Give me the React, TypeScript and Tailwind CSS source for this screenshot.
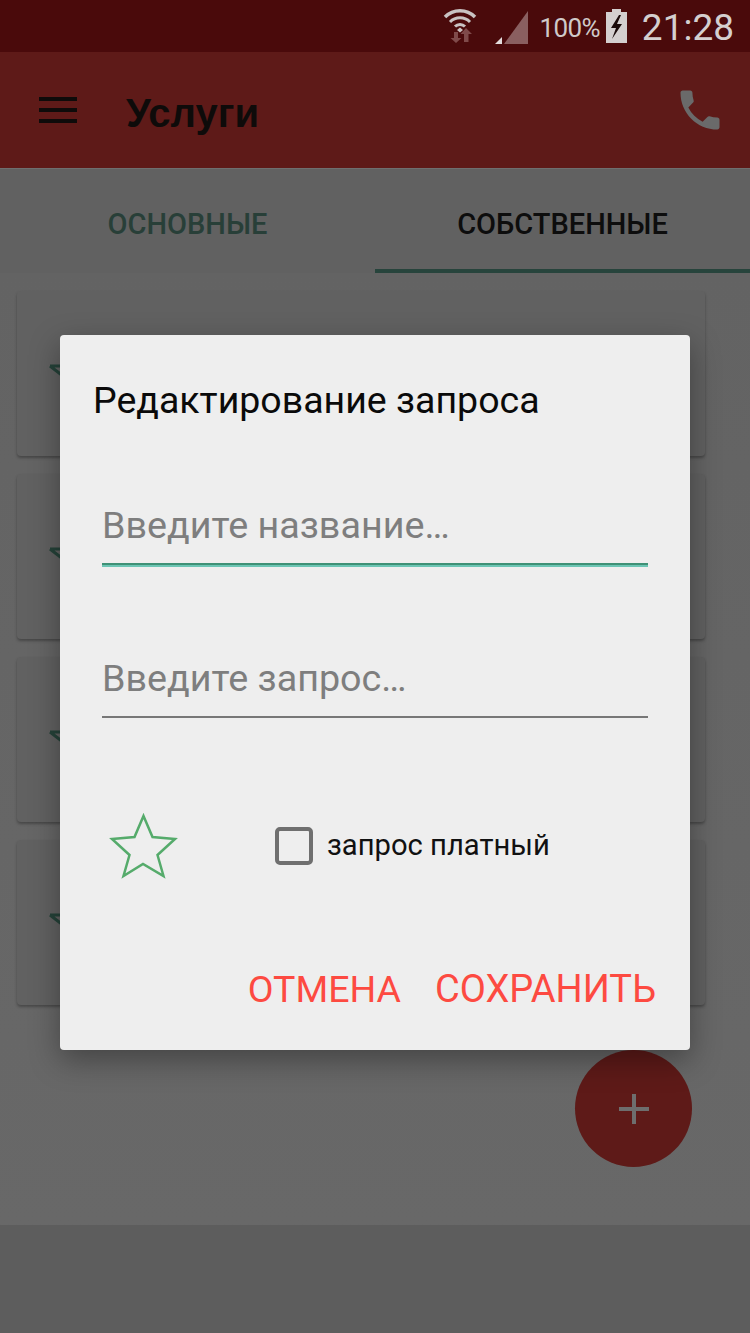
const PHONE = "M6.62 10.79c1.44 2.83 3.76 5.14 6.59 6.59l2.2-2.2c.27-.27.67-.36 1.02-.24 1.12.37 2.33.57 3.57.57.55 0 1 .45 1 1V20c0 .55-.45 1-1 1-9.39 0-17-7.61-17-17 0-.55.45-1 1-1h3.5c.55 0 1 .45 1 1 0 1.25.2 2.45.57 3.57.11.35.03.74-.25 1.02l-2.2 2.2z";

function Card() {
  return (
    <div className="relative h-[165px] rounded-[4px] bg-[#616161] shadow-[0_2px_3px_rgba(0,0,0,0.3)]">
      <svg className="absolute left-[32px] top-[70px]" width="30" height="24" viewBox="0 0 30 24">
        <path d="M1 5 H14 M1 5 L14 15" fill="none" stroke="#254239" strokeWidth="3" />
      </svg>
    </div>
  );
}

export default function App() {
  return (
    <div className="relative w-[750px] h-[1333px] overflow-hidden bg-[#666666] font-['Roboto',sans-serif]">
      {/* status bar */}
      <div className="h-[52px] bg-[#4a0a0b] flex items-center justify-end pr-[16px]">
        <svg className="mr-[18px]" width="34" height="36" viewBox="0 0 34 36">
          <path d="M2 9 A21 21 0 0 1 32 9" fill="none" stroke="#c9c2c2" strokeWidth="3.5" />
          <path d="M7 14 A14 14 0 0 1 27 14" fill="none" stroke="#c9c2c2" strokeWidth="3" />
          <path d="M12 18.5 A7 7 0 0 1 22 18.5" fill="none" stroke="#c9c2c2" strokeWidth="3" />
          <path d="M14 22 L17 19.5 L20 22 L17 24.5 Z" fill="#c9c2c2" />
          <path d="M11 24 H15 V30 H18.5 L13 35 L7.5 30 H11 Z" fill="#7f4a4a" />
          <path d="M21 34 H25.5 V26 H29 L23 20 L17.5 26 H21 Z" fill="#7f4a4a" />
        </svg>
        <svg className="mr-[11px] mt-[2px]" width="33" height="33" viewBox="0 0 33 33">
          <path d="M33 0 V33 H9 Z" fill="#8a5f60" />
          <path d="M0 33 L7 26 V33 Z" fill="#e2dcdc" />
        </svg>
        <span className="text-[26px] leading-none text-[#cfc9c9] tracking-[-0.6px] mr-[6px] mt-[4px]">100%</span>
        <svg className="mr-[15px]" width="21" height="34" viewBox="0 0 21 34">
          <path d="M6 0 H15 V3 H21 V34 H0 V3 H6 Z" fill="#d4cfcf" />
          <path d="M13 6 L5 19 H10 L6 30 L16 15 H11 L15 6 Z" fill="#1a0a0a" />
        </svg>
        <span className="text-[37px] leading-none text-[#d4cfcf] mt-[2px]">21:28</span>
      </div>

      {/* app bar */}
      <div className="h-[116px] bg-[#5e1a18] flex items-center">
        <div className="ml-[39px] w-[38px] flex flex-col gap-[7px]">
          <div className="h-[4px] bg-[#0e0b0a]" />
          <div className="h-[4px] bg-[#0e0b0a]" />
          <div className="h-[4px] bg-[#0e0b0a]" />
        </div>
        <h1 className="ml-[49px] mt-[6px] text-[40px] leading-none font-bold text-[#0e0b0a] font-['Liberation_Sans',sans-serif]">Услуги</h1>
        <svg className="ml-auto mr-[24px]" width="52" height="52" viewBox="0 0 24 24" fill="#6a6a6a">
          <path d={PHONE} />
        </svg>
      </div>

      {/* tabs */}
      <div className="h-[105px] bg-[#616161] border-t border-[#6f6f6f] grid grid-cols-2">
        <div className="flex items-center justify-center pt-[7px] text-[29px] font-medium text-[#283f38]">ОСНОВНЫЕ</div>
        <div className="flex items-center justify-center pt-[11px] border-b-[4px] border-[#27443c] text-[29px] font-medium text-[#0d0d0d]">СОБСТВЕННЫЕ</div>
      </div>

      {/* list */}
      <div className="h-[952px] bg-gradient-to-b from-[#636363] to-[#686868] pt-[18px] pl-[17px] pr-[45px] flex flex-col gap-[18px]">
        <Card />
        <Card />
        <Card />
        <Card />
      </div>

      {/* bottom area */}
      <div className="h-[108px] bg-[#5d5d5d]" />

      {/* FAB */}
      <div className="absolute left-[575px] top-[1050px] w-[117px] h-[117px] rounded-full bg-[#5e1a18] flex items-center justify-center">
        <svg width="30" height="30" viewBox="0 0 30 30">
          <path d="M15 0 V30 M0 15 H30" stroke="#6e6e6e" strokeWidth="4" />
        </svg>
      </div>

      {/* dialog */}
      <div className="absolute left-[60px] top-[335px] w-[630px] h-[715px] rounded-[4px] bg-[#eeeeee] shadow-[0_10px_30px_rgba(0,0,0,0.35)] flex flex-col">
        <h2 className="ml-[33px] mt-[44px] text-[37.5px] leading-[42px] text-[#0a0a0a]">Редактирование запроса</h2>

        <div className="mx-[42px] mt-[77px] h-[67px] border-b-2 border-[#3f9176] shadow-[0_2px_0_#6cc5b4] flex items-start">
          <span className="text-[37.7px] leading-[54px] text-[#7e7e7e]">Введите название…</span>
        </div>
        <div className="mx-[42px] mt-[84px] h-[69px] border-b-2 border-[#777777] flex items-start">
          <span className="text-[37.7px] leading-[58px] text-[#7e7e7e]">Введите запрос…</span>
        </div>

        <div className="mt-[90px] flex items-center h-[76px]">
          <svg className="ml-[47px]" width="74" height="72" viewBox="0 0 74 72">
            <path d="M36.5 6 L45.5 27 L68 29 L50.5 45 L56.5 66 L36 54 L16.5 66 L22.5 45 L5 29 L27.5 27 Z" fill="none" stroke="#55ab6b" strokeWidth="2.5" strokeLinejoin="miter" />
          </svg>
          <div className="ml-[94px] w-[38px] h-[38px] rounded-[5px] border-[4px] border-[#6f6f6f]" />
          <span className="ml-[14px] text-[29.2px] leading-none text-[#111111]">запрос платный</span>
        </div>

        <div className="mt-[84px] mr-[34px] flex justify-end gap-[34px] leading-[42px] text-[#fd4a41]">
          <span className="text-[37.5px]">ОТМЕНА</span>
          <span className="text-[38px]">СОХРАНИТЬ</span>
        </div>
      </div>
    </div>
  );
}
